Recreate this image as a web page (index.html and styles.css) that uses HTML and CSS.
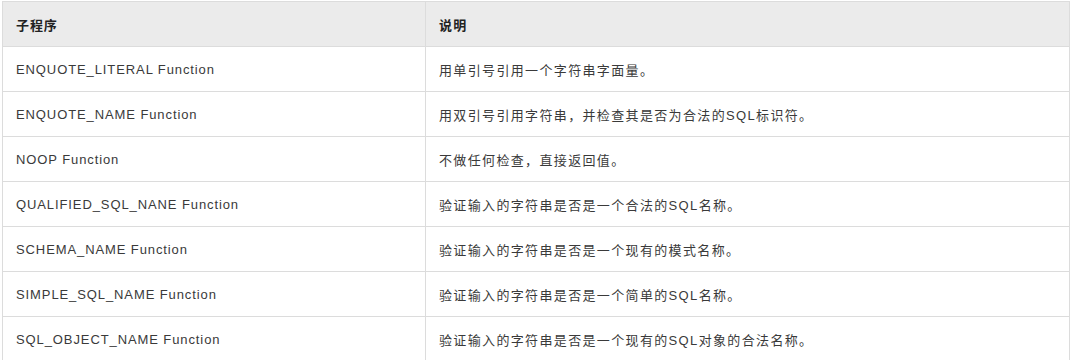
FILE: index.html
```html
<!DOCTYPE html>
<html lang="zh">
<head>
<meta charset="utf-8">
<link rel="stylesheet" href="styles.css">
</head>
<body>
<table class="ref">
  <thead>
    <tr><th class="c1">子程序</th><th class="desc">说明</th></tr>
  </thead>
  <tbody>
    <tr><td>ENQUOTE_LITERAL Function</td><td class="desc">用单引号引用一个字符串字面量。</td></tr>
    <tr><td>ENQUOTE_NAME Function</td><td class="desc">用双引号引用字符串，并检查其是否为合法的SQL标识符。</td></tr>
    <tr><td>NOOP Function</td><td class="desc">不做任何检查，直接返回值。</td></tr>
    <tr><td>QUALIFIED_SQL_NANE Function</td><td class="desc">验证输入的字符串是否是一个合法的SQL名称。</td></tr>
    <tr><td>SCHEMA_NAME Function</td><td class="desc">验证输入的字符串是否是一个现有的模式名称。</td></tr>
    <tr><td>SIMPLE_SQL_NAME Function</td><td class="desc">验证输入的字符串是否是一个简单的SQL名称。</td></tr>
    <tr><td>SQL_OBJECT_NAME Function</td><td class="desc">验证输入的字符串是否是一个现有的SQL对象的合法名称。</td></tr>
  </tbody>
</table>
</body>
</html>
```
FILE: styles.css
```css
html, body { margin: 0; padding: 0; background: #fff; }
body { padding: 1px 0 0 2px; }
.ref {
  border-collapse: collapse;
  width: 1068px;
  table-layout: fixed;
  font-family: "Liberation Sans", Arial, "Noto Sans CJK SC", sans-serif;
  font-size: 13px;
  color: #3a3a3a;
  letter-spacing: 0.9px;
}
.ref th, .ref td {
  box-sizing: border-box;
  border: 1px solid #dcdcdc;
  height: 45px;
  padding: 0 13px;
  text-align: left;
  vertical-align: middle;
}
.ref th {
  background: #ebebeb;
  font-weight: bold;
  color: #222;
}
.ref .c1 { width: 423px; }
.ref .desc { letter-spacing: 1.35px; }
```
